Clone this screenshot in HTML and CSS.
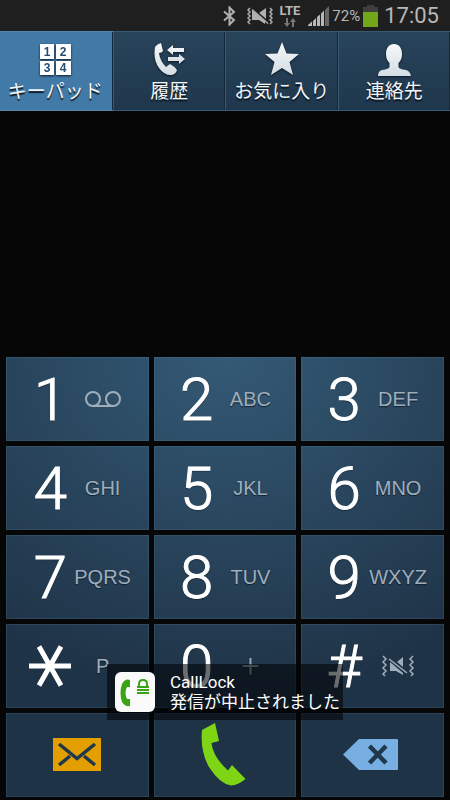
FILE: index.html
```html
<!DOCTYPE html>
<html lang="ja">
<head>
<meta charset="utf-8">
<meta name="viewport" content="width=device-width, initial-scale=1">
<title>キーパッド</title>
<link rel="stylesheet" href="styles.css">
</head>
<body>
<svg class="defs" aria-hidden="true">
  <linearGradient id="metal" x1="0" y1="0" x2="0" y2="1">
    <stop offset="0" stop-color="#f6f8fa"/>
    <stop offset="1" stop-color="#d3dde4"/>
  </linearGradient>
</svg>
<header class="status">
  <svg class="bluetooth" width="13" height="20" viewBox="0 0 13 20" aria-label="Bluetooth"><path d="M1 5.500L11 14 6.500 18.500V1.500L11 6 1 14.500" fill="none" stroke="#b0b0b0" stroke-width="2"/></svg>
  <svg class="vibrate" width="26" height="18" viewBox="0 0 26 18" aria-label="マナーモード">
    <path d="M3 1L1 3 3 5 1 7 3 9 1 11 3 13 1 15 3 17M23 1L25 3 23 5 25 7 23 9 25 11 23 13 25 15 23 17" fill="none" stroke="#b0b0b0" stroke-width="1.500"/>
    <path d="M5 3L18 14V17L12 13H5ZM12 6L19 1V12Z" fill="#b0b0b0"/>
    <path d="M5 1L22 16" stroke="#1f1f1f" stroke-width="2"/><path d="M5 2.500L21 16.500" stroke="#b0b0b0" stroke-width="1.500"/>
  </svg>
  <span class="network"><span>LTE</span>
    <svg width="12" height="9" viewBox="0 0 12 9" aria-hidden="true"><path d="M2 0h2v5h2L3 9 0 5h2zM8 9h2V4h2L9 0 6 4h2z" fill="#777"/></svg>
  </span>
  <svg class="signal" width="21" height="20" viewBox="0 0 21 20" aria-label="電波"><path d="M0 20V19L4 15.500V20ZM5 20V15L8 12V20ZM9 20V11L12 8.500V20ZM13 20V7.500L16 4.500V20Z" fill="#b8b8b8"/><path d="M17 20V4L21 0V20Z" fill="#666"/></svg>
  <span class="percent">72%</span>
  <svg class="battery" width="15" height="22" viewBox="0 0 15 22" aria-label="電池"><path d="M4 0h7v2h4v5H0V2h4z" fill="#3e3e3e"/><path d="M0 7h15v15H0z" fill="#73a71a"/></svg>
  <time class="clock">17:05</time>
</header>

<nav class="tabs">
  <a class="tab tab-active" href="#keypad">
    <svg class="tab-icon" width="40" height="36" viewBox="0 0 40 36" aria-hidden="true">
      <path d="M5 2h14v15H5zM21 2h15v15H21zM5 19h14v14H5zM21 19h15v14H21z" fill="#fff"/>
      <g class="mini"><text x="12" y="14">1</text><text x="28" y="14">2</text><text x="12" y="30">3</text><text x="28" y="30">4</text></g>
    </svg>
    <span>キーパッド</span>
  </a>
  <a class="tab" href="#logs">
    <svg class="tab-icon" width="40" height="36" viewBox="0 0 40 36" aria-hidden="true">
      <path d="M6 5Q8 2 12 1L14 9Q13 11 10 11Q11 19 17 25L21 22Q25 24 28 28Q27 32 23 33Q16 34 10 26Q4 18 6 5Z" fill="url(#metal)"/>
      <path d="M18 8L24 3V6H35V10H24V13ZM36 17L30 12V15H19V19H30V22Z" fill="url(#metal)"/>
    </svg>
    <span>履歴</span>
  </a>
  <a class="tab" href="#favorites">
    <svg class="tab-icon" width="40" height="36" viewBox="0 0 40 36" aria-hidden="true"><path d="M20 0L24.500 11.500 37 12 27.500 20 31 33 20 26 9 33 12.500 20 3 12 15.500 11.500Z" fill="url(#metal)"/></svg>
    <span>お気に入り</span>
  </a>
  <a class="tab" href="#contacts">
    <svg class="tab-icon" width="40" height="36" viewBox="0 0 40 36" aria-hidden="true"><path d="M20 2C25 2 28 6 28 12Q28 18 24.500 21V25Q25 27 32 28Q36 29 37 34H4Q4 29 8 28Q15 27 15.500 25V21Q12 18 12 12C12 6 15 2 20 2Z" fill="url(#metal)"/></svg>
    <span>連絡先</span>
  </a>
</nav>

<main class="dialer" id="keypad">
  <output class="number" aria-label="電話番号"></output>
  <div class="keys">
    <button class="key"><span class="digit">1</span><svg class="sub" width="38" height="18" viewBox="0 0 38 18" aria-label="留守番電話"><g fill="none" stroke="#9faebb" stroke-width="2"><circle cx="9" cy="9" r="7"/><circle cx="29" cy="9" r="7"/><path d="M9 16H29"/></g></svg></button>
    <button class="key"><span class="digit">2</span><span class="sub">ABC</span></button>
    <button class="key"><span class="digit">3</span><span class="sub">DEF</span></button>
    <button class="key"><span class="digit">4</span><span class="sub">GHI</span></button>
    <button class="key"><span class="digit">5</span><span class="sub">JKL</span></button>
    <button class="key"><span class="digit">6</span><span class="sub">MNO</span></button>
    <button class="key"><span class="digit">7</span><span class="sub">PQRS</span></button>
    <button class="key"><span class="digit">8</span><span class="sub">TUV</span></button>
    <button class="key"><span class="digit">9</span><span class="sub">WXYZ</span></button>
    <button class="key" aria-label="* P"><svg width="42" height="42" viewBox="0 0 42 42" aria-hidden="true"><path d="M0 21H42M10 1.500L32 40.500M32 1.500L10 40.500" stroke="#fff" stroke-width="5"/></svg><span class="sub">P</span></button>
    <button class="key"><span class="digit">0</span><span class="sub plus">+</span></button>
    <button class="key"><span class="digit">#</span><svg class="sub" width="34" height="22" viewBox="0 0 34 22" aria-label="マナーモード"><path d="M2 1L5 4 2 7 5 10 2 13 5 16 2 19 4 21M32 1L29 4 32 7 29 10 32 13 29 16 32 19 30 21" fill="none" stroke="#9faebb" stroke-width="1.500"/><path d="M9 7L22 18V20L15 16H9ZM16 7L22 2V12Z" fill="#9faebb"/><path d="M8 2L26 17" stroke="#20374a" stroke-width="2"/><path d="M8 4L26 18" stroke="#9faebb" stroke-width="1.500"/></svg></button>
    <button class="key action" aria-label="メッセージ"><svg width="48" height="34" viewBox="0 0 48 34"><path d="M0 0H48V33H0Z" fill="#e39f00"/><path d="M6 6L24 20.500 42 6M6 27L17 18M42 27L31 18" fill="none" stroke="#1f374b" stroke-width="3.500"/></svg></button>
    <button class="key action" aria-label="発信"><svg width="50" height="64" viewBox="0 0 50 64"><path d="M2 7L15 0 19 18 11.500 20Q13 34 28 47.500L32 42 45.500 56Q38 62 31 62.500Q20 61 9 44Q0 28 2 7Z" fill="#7dd516"/></svg></button>
    <button class="key action" aria-label="削除"><svg width="60" height="32" viewBox="0 0 60 32"><path d="M0 15.500L16 0H54Q55 0 55 1V30Q55 31 54 31H16Z" fill="#77afe2"/><path d="M26.500 7L43 24M43 7L26.500 24" stroke="#20384c" stroke-width="4.500"/></svg></button>
  </div>
</main>

<aside class="toast" role="status">
  <svg width="40" height="40" viewBox="0 0 40 40" aria-hidden="true"><rect width="40" height="40" rx="6" fill="#fafafa"/><path d="M15 8V15H12Q9 21 12 27H15V34Q10 35 7 30Q4 21 7 12Q10 6 15 8Z" fill="#3aa317"/><path d="M22 14H34V16H22ZM22 17H34V19H22ZM22 20H34V22H22Z" fill="#3aa317"/><path d="M24 14V12Q24 8 28 8T32 12V14" fill="none" stroke="#3aa317" stroke-width="2"/></svg>
  <p>CallLock<br>発信が中止されました</p>
</aside>
</body>
</html>
```
FILE: styles.css
```css
* { box-sizing: border-box; }

body {
  margin: 0;
  min-height: 100vh;
  position: relative;
  display: flex;
  flex-direction: column;
  background: #060606;
  color: #fff;
  font-family: Roboto, "Noto Sans CJK JP", sans-serif;
}

.defs { position: absolute; width: 0; height: 0; }

.status {
  display: flex;
  align-items: center;
  justify-content: flex-end;
  height: 31px;
  padding-right: 11px;
  background: #1f1f1f;
  color: #b8b8b8;
}
.bluetooth { margin-right: 11px; }
.vibrate { margin-right: 6px; }
.network {
  display: flex;
  flex-direction: column;
  align-items: center;
  gap: 1px;
  margin-right: 8px;
  font-size: 13px;
  font-weight: 700;
  line-height: 13px;
}
.signal { margin-right: 3px; }
.percent { margin-right: 3px; font-size: 15px; }
.battery { margin-right: 6px; }
.clock { font-size: 22px; line-height: 30px; }

.tabs { display: grid; grid-template-columns: repeat(4, 1fr); }
.tab {
  display: flex;
  flex-direction: column;
  align-items: center;
  height: 80px;
  padding-top: 10px;
  border: 1px solid #385971;
  border-width: 1px 0 1px 1px;
  background: linear-gradient(#28445b, #1f374d);
  box-shadow: inset -1px 0 #14283a;
  color: #f4f4f4;
  font-size: 19px;
  line-height: 28px;
  text-decoration: none;
  white-space: nowrap;
  text-shadow: 0 2px 1px #0b1825;
}
.tab:first-child { border-left: 0; padding-right: 2px; }
.tab-active { background: #427aa7; border-color: #5288b2; }
.tab-icon { flex: none; filter: drop-shadow(0 1px 1px #0b1825); }
.mini {
  font: bold 12px "Liberation Sans", sans-serif;
  fill: #264b70;
  text-anchor: middle;
  text-shadow: none;
}

.dialer { flex: 1; display: flex; flex-direction: column; }
.number { flex: 1; }
.keys {
  display: grid;
  grid-template-columns: repeat(3, 1fr);
  grid-auto-rows: 84px;
  gap: 5px;
  padding: 0 6px 3px;
}
.key {
  display: grid;
  grid-template-columns: 46fr 62fr;
  align-items: center;
  justify-items: center;
  min-width: 0;
  padding: 0 14px 0 19px;
  border: 1px solid rgba(90, 140, 165, 0.2);
  background: radial-gradient(ellipse 86% 43% at 50% 44%, #345a76, #1f3347) fixed;
  color: inherit;
  font: inherit;
}
.key:nth-child(3n + 1) { padding: 0 15px 0 21px; }
.digit {
  padding-top: 2px;
  font-size: 60px;
  font-weight: 300;
  line-height: 60px;
  -webkit-text-stroke: 1px #fff;
  text-shadow: 0 1px 1px #0b1825;
}
.sub {
  color: #9faebb;
  font: 20px/24px "Liberation Sans", sans-serif;
  text-shadow: 0 1px 1px #0f2030;
}
.plus { font-family: Roboto, sans-serif; font-size: 32px; font-weight: 300; }
.key.action { display: flex; justify-content: center; padding: 0; }

.toast {
  position: absolute;
  bottom: 80px;
  left: 50%;
  display: flex;
  align-items: center;
  gap: 15px;
  width: max-content;
  padding: 8px 3px 8px 8px;
  background: rgba(2, 4, 6, 0.58);
  transform: translateX(-50%);
}
.toast p { margin: 0; font-size: 17px; line-height: 20px; }
```
